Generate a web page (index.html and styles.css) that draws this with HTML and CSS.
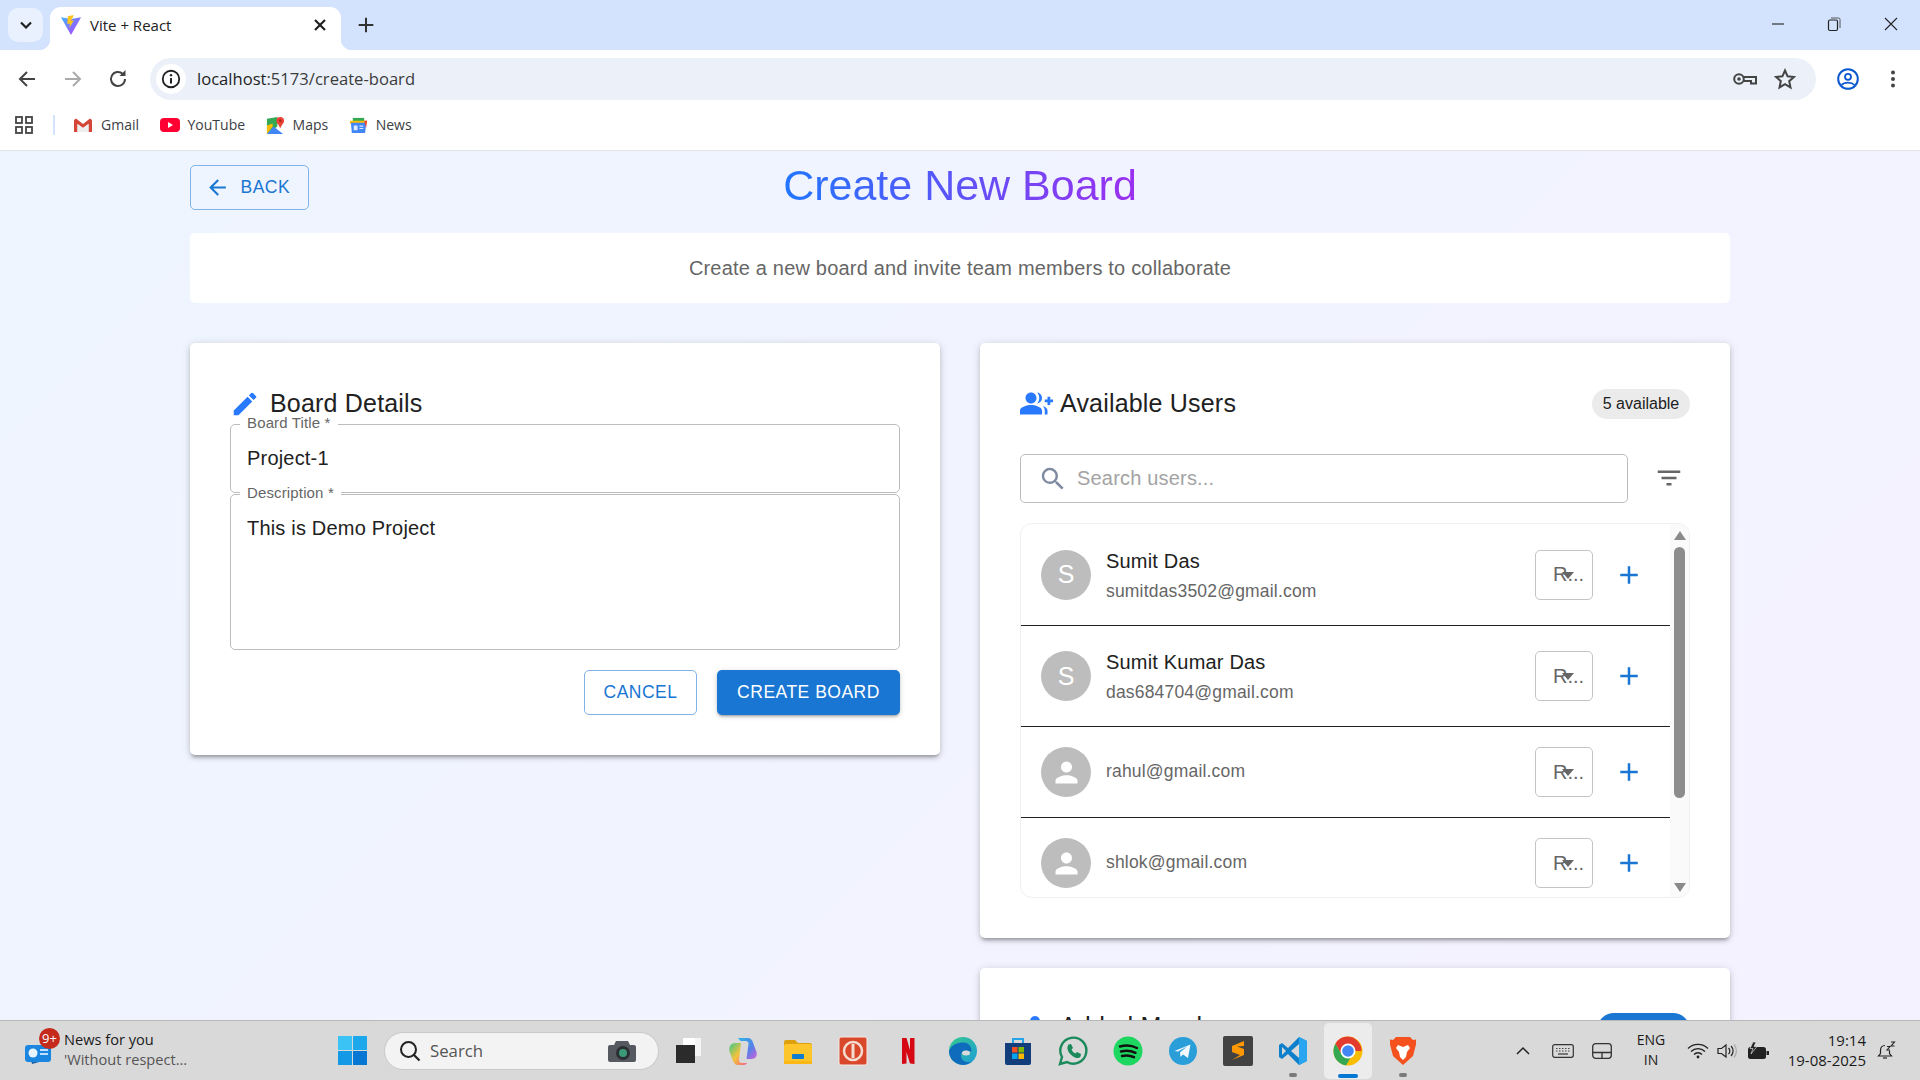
FILE: index.html
```html
<!DOCTYPE html>
<html lang="en">
<head>
<meta charset="utf-8">
<title>Vite + React</title>
<link rel="stylesheet" href="styles.css">
</head>
<body>
<div class="screen">
  <header class="tabstrip">
    <button class="tabsearch"><svg viewBox="0 0 24 24" width="20" height="20"><path d="M6 9l6 6 6-6" fill="none" stroke="#1f1f1f" stroke-width="2.6"/></svg></button>
    <div class="tab">
      <svg viewBox="0 0 24 24" width="22" height="22"><defs><linearGradient id="vt" x1="0" y1="0" x2="1" y2="1"><stop offset="0" stop-color="#41b8ff"/><stop offset="1" stop-color="#bd34fe"/></linearGradient></defs><path d="M1 3.500l11 19.500L23 3.500 12 5.500z" fill="url(#vt)"/><path d="M15 1L8.500 2.500 8 11l3-.6-.8 5 5-8.500-3 .6z" fill="#ffc51f"/></svg>
      <span class="tabtitle">Vite + React</span>
      <svg class="tabclose" viewBox="0 0 24 24" width="20" height="20"><path d="M6 6l12 12M18 6L6 18" stroke="#1f1f1f" stroke-width="2.6"/></svg>
    </div>
    <svg class="newtab" viewBox="0 0 24 24" width="22" height="22"><path d="M12 4v16M4 12h16" stroke="#333" stroke-width="2.2"/></svg>
    <div class="winctrls">
      <svg viewBox="0 0 16 16" width="16" height="16"><path d="M2 8h12" stroke="#222" stroke-width="1.1"/></svg>
      <svg viewBox="0 0 16 16" width="16" height="16"><rect x="2.5" y="4" width="9" height="10.5" rx="1.5" fill="none" stroke="#222" stroke-width="1.2"/><path d="M5 2h7.500a1.500 1.500 0 0 1 1.500 1.500V12" fill="none" stroke="#555" stroke-width="1"/></svg>
      <svg viewBox="0 0 16 16" width="16" height="16"><path d="M2 2l12 12M14 2L2 14" stroke="#222" stroke-width="1.1"/></svg>
    </div>
  </header>

  <div class="toolbar">
    <svg class="navicon" viewBox="0 0 24 24" width="24" height="24"><path d="M20 12H5M12 5l-7 7 7 7" fill="none" stroke="#444" stroke-width="2"/></svg>
    <svg class="navicon" viewBox="0 0 24 24" width="24" height="24"><path d="M4 12h15M12 5l7 7-7 7" fill="none" stroke="#aaa" stroke-width="2"/></svg>
    <svg class="navicon" viewBox="0 0 24 24" width="24" height="24"><path d="M19 12a7 7 0 1 1-2.200-5.100" fill="none" stroke="#444" stroke-width="2"/><path d="M19.500 3v6h-6z" fill="#444"/></svg>
    <div class="omnibox">
      <span class="infobubble"><svg viewBox="0 0 24 24" width="22" height="22"><circle cx="12" cy="12" r="9" fill="none" stroke="#222" stroke-width="2"/><path d="M12 11v6" stroke="#222" stroke-width="2.2"/><circle cx="12" cy="7.800" r="1.300" fill="#222"/></svg></span>
      <span class="url">localhost<span class="urlrest">:5173/create-board</span></span>
      <svg class="omniicon omnikey" viewBox="0 0 24 18" width="24" height="18"><circle cx="6" cy="9" r="4.800" fill="none" stroke="#444" stroke-width="2"/><circle cx="6" cy="9" r="1.800" fill="#444"/><path d="M11 7h12v6.500h-5V11h-7" fill="none" stroke="#444" stroke-width="2"/></svg>
      <svg class="omniicon" viewBox="0 0 24 24" width="24" height="24"><path d="M12 3.500l2.600 5.800 6.300.7-4.700 4.200 1.300 6.200L12 17.200l-5.500 3.200 1.300-6.200L3.100 10l6.300-.7z" fill="none" stroke="#444" stroke-width="2"/></svg>
    </div>
    <svg class="profile" viewBox="0 0 24 24" width="24" height="24"><circle cx="12" cy="12" r="9.800" fill="none" stroke="#0b57d0" stroke-width="2"/><circle cx="12" cy="9.800" r="3" fill="none" stroke="#0b57d0" stroke-width="1.800"/><path d="M5.500 18c3-3.200 10-3.200 13 0" fill="none" stroke="#0b57d0" stroke-width="1.800"/></svg>
    <svg class="kebab" viewBox="0 0 24 24" width="24" height="24"><circle cx="12" cy="5.500" r="2" fill="#444"/><circle cx="12" cy="12" r="2" fill="#444"/><circle cx="12" cy="18.500" r="2" fill="#444"/></svg>
  </div>

  <nav class="bookmarks">
    <svg class="apps" viewBox="0 0 18 18" width="18" height="18"><g fill="none" stroke="#444" stroke-width="1.800"><rect x="1" y="1" width="6" height="6"/><rect x="11" y="1" width="6" height="6"/><rect x="1" y="11" width="6" height="6"/><rect x="11" y="11" width="6" height="6"/></g></svg>
    <span class="bmsep"></span>
    <a class="bm"><svg viewBox="0 0 20 16" width="20" height="16"><path d="M1 3v12h3.500V7L10 11l5.500-4v8H19V3l-2-1.500L10 7 3 1.500z" fill="#d44638"/><path d="M4.500 15V7L10 11l5.500-4v8z" fill="#eee"/></svg>Gmail</a>
    <a class="bm"><svg viewBox="0 0 20 14" width="20" height="14"><rect width="20" height="14" rx="4" fill="#ff0033"/><path d="M8 4l5 3-5 3z" fill="#fff"/></svg>YouTube</a>
    <a class="bm"><svg viewBox="0 0 20 20" width="19" height="19"><path d="M1 3l11-2v10L1 19z" fill="#34a853"/><path d="M1 19l7-8 10 8z" fill="#4285f4"/><path d="M1 10l6-2v3l-6 8z" fill="#fbbc04"/><circle cx="15" cy="5" r="4" fill="#ea4335"/><path d="M12 7l3 6 3-6z" fill="#ea4335"/><circle cx="15" cy="5" r="1.300" fill="#a52714"/></svg>Maps</a>
    <a class="bm"><svg viewBox="0 0 20 20" width="19" height="19"><path d="M4 2h12v6H4z" fill="#34a853"/><path d="M1 5h18v3H1z" fill="#fbbc04"/><path d="M2 7h16l-1 11H3z" fill="#4285f4"/><path d="M16 5h3l-1 8z" fill="#ea4335"/><path d="M5 10h4v5H5zM11 10h4v1.300h-4zM11 12.500h4v1.300h-4z" fill="#dbe8ff"/></svg>News</a>
  </nav>

  <main class="page">
    <div class="pagehead">
      <div class="headleft">
        <button class="btn btn-outline btn-back"><svg viewBox="0 0 24 24" width="25" height="25"><path d="M20 11H7.830l5.590-5.590L12 4l-8 8 8 8 1.410-1.410L7.830 13H20v-2z" fill="#1976d2"/></svg>Back</button>
      </div>
      <h1 class="pagetitle">Create New Board</h1>
      <div></div>
    </div>
    <div class="subtitle">Create a new board and invite team members to collaborate</div>

    <div class="columns">
      <section class="card card-left">
        <h2 class="cardtitle"><svg class="titleicon icon-edit" viewBox="0 0 24 24" width="30" height="30"><path d="M3 17.250V21h3.750L17.810 9.940l-3.750-3.750L3 17.250zM20.710 7.040a1 1 0 0 0 0-1.410l-2.340-2.340a1 1 0 0 0-1.410 0l-1.830 1.830 3.750 3.750 1.830-1.830z" fill="#2979ff"/></svg>Board Details</h2>
        <div class="field field-title">
          <label class="fieldlabel">Board Title *</label>
          <span class="fieldvalue">Project-1</span>
        </div>
        <div class="field field-desc">
          <label class="fieldlabel">Description *</label>
          <span class="fieldvalue">This is Demo Project</span>
        </div>
        <div class="actions">
          <button class="btn btn-outline btn-cancel">Cancel</button>
          <button class="btn btn-solid">Create Board</button>
        </div>
      </section>

      <div class="rightcol">
        <section class="card card-users">
          <div class="usershead">
            <h2 class="cardtitle"><svg class="titleicon icon-users" viewBox="0 0 24 24" width="33" height="33"><path d="M22 9V7h-2v2h-2v2h2v2h2v-2h2V9zM8 12c2.210 0 4-1.790 4-4s-1.790-4-4-4-4 1.790-4 4 1.790 4 4 4zm0 1c-2.670 0-8 1.340-8 4v3h16v-3c0-2.660-5.330-4-8-4zm4.510-8.950C13.430 5.110 14 6.490 14 8s-.57 2.890-1.490 3.950C14.470 11.700 16 10.040 16 8s-1.530-3.700-3.490-3.950zm4.020 9.780C17.420 14.660 18 15.700 18 17v3h2v-3c0-1.450-1.590-2.510-3.470-3.170z" fill="#2979ff"/></svg>Available Users</h2>
            <span class="chip">5 available</span>
          </div>
          <div class="searchrow">
            <div class="searchbox">
              <svg viewBox="0 0 24 24" width="30" height="30"><path d="M15.500 14h-.79l-.28-.27A6.470 6.470 0 0 0 16 9.500 6.500 6.500 0 1 0 9.500 16c1.610 0 3.090-.59 4.230-1.570l.27.28v.79l5 4.990L20.490 19l-4.990-5zm-6 0C7.010 14 5 11.990 5 9.500S7.010 5 9.500 5 14 7.010 14 9.500 11.990 14 9.500 14z" fill="#7e8ba0"/></svg>
              <span>Search users...</span>
            </div>
            <svg class="filter" viewBox="0 0 24 24" width="30" height="30"><path d="M10 18h4v-2h-4v2zM3 6v2h18V6H3zm3 7h12v-2H6v2z" fill="#666"/></svg>
          </div>
          <div class="userlist">
            <div class="rows">
              <div class="row row-tall">
                <span class="avatar">S</span>
                <div class="userinfo"><div class="username">Sumit Das</div><div class="useremail">sumitdas3502@gmail.com</div></div>
                <div class="rolesel">R...<i class="caret"></i></div>
                <svg class="plus" viewBox="0 0 24 24" width="30" height="30"><path d="M19 13h-6v6h-2v-6H5v-2h6V5h2v6h6v2z" fill="#1976d2"/></svg>
              </div>
              <div class="row row-tall">
                <span class="avatar">S</span>
                <div class="userinfo"><div class="username">Sumit Kumar Das</div><div class="useremail">das684704@gmail.com</div></div>
                <div class="rolesel">R...<i class="caret"></i></div>
                <svg class="plus" viewBox="0 0 24 24" width="30" height="30"><path d="M19 13h-6v6h-2v-6H5v-2h6V5h2v6h6v2z" fill="#1976d2"/></svg>
              </div>
              <div class="row">
                <span class="avatar"><svg viewBox="0 0 24 24" width="33" height="33"><path d="M12 12c2.210 0 4-1.790 4-4s-1.790-4-4-4-4 1.790-4 4 1.790 4 4 4zm0 2c-2.670 0-8 1.340-8 4v2h16v-2c0-2.660-5.330-4-8-4z" fill="#fff"/></svg></span>
                <div class="userinfo"><div class="useremail">rahul@gmail.com</div></div>
                <div class="rolesel">R...<i class="caret"></i></div>
                <svg class="plus" viewBox="0 0 24 24" width="30" height="30"><path d="M19 13h-6v6h-2v-6H5v-2h6V5h2v6h6v2z" fill="#1976d2"/></svg>
              </div>
              <div class="row">
                <span class="avatar"><svg viewBox="0 0 24 24" width="33" height="33"><path d="M12 12c2.210 0 4-1.790 4-4s-1.790-4-4-4-4 1.790-4 4 1.790 4 4 4zm0 2c-2.670 0-8 1.340-8 4v2h16v-2c0-2.660-5.330-4-8-4z" fill="#fff"/></svg></span>
                <div class="userinfo"><div class="useremail">shlok@gmail.com</div></div>
                <div class="rolesel">R...<i class="caret"></i></div>
                <svg class="plus" viewBox="0 0 24 24" width="30" height="30"><path d="M19 13h-6v6h-2v-6H5v-2h6V5h2v6h6v2z" fill="#1976d2"/></svg>
              </div>
            </div>
            <div class="scrollbar">
              <i class="sb-up"></i>
              <i class="sb-thumb"></i>
              <i class="sb-down"></i>
            </div>
          </div>
        </section>
        <section class="card card-members">
          <div class="usershead">
            <h2 class="cardtitle"><svg class="titleicon" viewBox="0 0 24 24" width="30" height="30"><path d="M12 12c2.210 0 4-1.790 4-4s-1.790-4-4-4-4 1.790-4 4 1.790 4 4 4zm0 2c-2.670 0-8 1.340-8 4v2h16v-2c0-2.660-5.330-4-8-4z" fill="#2979ff"/></svg>Added Members</h2>
            <span class="chip chip-blue"></span>
          </div>
        </section>
      </div>
    </div>
  </main>

  <footer class="taskbar">
    <div class="widget">
      <span class="widgeticon">
        <svg viewBox="0 0 30 30" width="30" height="30"><path d="M4 12l20-3 2 14-18 5z" fill="#1b5fa8"/><rect x="1" y="9" width="26" height="17" rx="3" fill="#1a86e0"/><circle cx="9" cy="17" r="4.500" fill="#e8f4ff"/><path d="M16 14h8M16 18h8" stroke="#bfe0ff" stroke-width="2"/></svg>
        <b class="badge">9+</b>
      </span>
      <div class="widgettext"><div>News for you</div><div class="muted">'Without respect...</div></div>
    </div>
    <svg class="winlogo" viewBox="0 0 29 29" width="29" height="29"><rect width="14" height="14" fill="#3cc3f5"/><rect x="15" width="14" height="14" fill="#1ea8ec"/><rect y="15" width="14" height="14" fill="#1399e6"/><rect x="15" y="15" width="14" height="14" fill="#0678d4"/></svg>
    <div class="winsearch">
      <svg viewBox="0 0 24 24" width="24" height="24"><circle cx="10.500" cy="10.500" r="7.500" fill="none" stroke="#222" stroke-width="2"/><path d="M16 16l5.500 5.500" stroke="#222" stroke-width="2.200"/></svg>
      <span>Search</span>
      <svg class="camera" viewBox="0 0 30 30" width="30" height="30"><path d="M9 5h12l2 4h4a2 2 0 0 1 2 2v13a2 2 0 0 1-2 2H3a2 2 0 0 1-2-2V11a2 2 0 0 1 2-2h4z" fill="#565a60"/><circle cx="16" cy="17" r="7" fill="#2b2f33"/><circle cx="16" cy="17" r="4" fill="#3a9a78"/></svg>
    </div>
    <div class="appicons">
      <span class="app"><svg viewBox="0 0 30 30" width="30" height="30"><rect x="10" y="2" width="18" height="18" fill="#f4f4f4"/><rect x="3" y="9" width="19" height="18" fill="#2b2b2b"/><rect x="10" y="2" width="12" height="7" fill="#fff"/></svg></span>
      <span class="app"><svg viewBox="0 0 30 30" width="30" height="30"><defs><linearGradient id="cpa" x1="0" y1="0" x2="1" y2="1"><stop offset="0" stop-color="#2bb5e8"/><stop offset=".6" stop-color="#5a7fe8"/><stop offset="1" stop-color="#d45fd8"/></linearGradient><linearGradient id="cpb" x1="0" y1="0" x2="1" y2="1"><stop offset="0" stop-color="#38c98a"/><stop offset=".5" stop-color="#f5c33b"/><stop offset="1" stop-color="#f0608a"/></linearGradient></defs><path d="M10 2h10c3 0 4.500 2.500 5.500 6l3 8c1 4-1 7-5 7h-5l2-15c.3-2-1-3-3-3h-5z" fill="url(#cpa)"/><path d="M7 7h6l-2 16c-.3 2 1 4 3 4h5c-1 1.500-2 2-4 2h-5c-3 0-4.500-2-5.500-5.500l-3-8C.500 11 3 7 7 7z" fill="url(#cpb)"/></svg></span>
      <span class="app"><svg viewBox="0 0 30 30" width="30" height="30"><path d="M1 6a2 2 0 0 1 2-2h9l3 3h12a2 2 0 0 1 2 2v4H1z" fill="#dfa00e"/><rect x="1" y="8" width="28" height="20" rx="2" fill="#fbc52b"/><rect x="9" y="18" width="12" height="5" rx="1" fill="#0f7bd1"/><rect x="1" y="25" width="28" height="3" fill="#fbb716"/></svg></span>
      <span class="app"><svg viewBox="0 0 30 30" width="30" height="30"><rect x="1" y="1" width="28" height="28" rx="2" fill="#d9482a" stroke="#f4e9e4"/><circle cx="15" cy="15" r="9" fill="none" stroke="#f5ddd2" stroke-width="2.500"/><rect x="13.500" y="8" width="3" height="14" fill="#f5ddd2"/></svg></span>
      <span class="app"><svg viewBox="0 0 30 30" width="30" height="30"><path d="M9 2h4.500L17 14V2h4.500v26q-2.200-.4-4.500-.5L13.500 16v11.500Q11 27.700 9 28z" fill="#d60813"/></svg></span>
      <span class="app"><svg viewBox="0 0 30 30" width="30" height="30"><defs><linearGradient id="edg" x1="0" y1="0" x2="1" y2="1"><stop offset="0" stop-color="#36c98e"/><stop offset="1" stop-color="#1c9dd8"/></linearGradient></defs><circle cx="15" cy="15" r="14" fill="url(#edg)"/><path d="M1 15a14 14 0 0 0 23 10.500c-6 2-11-1-11-6 0-3 2.500-5 5.500-5 3 0 5 2 5 0 0-5-4-8-8-8C9 6.500 3 9 1 15z" fill="#0f6cbd"/><ellipse cx="18" cy="17" rx="4" ry="2.500" fill="#d9d9d9"/></svg></span>
      <span class="app"><svg viewBox="0 0 30 30" width="30" height="30"><path d="M10 7V3h10v4" fill="none" stroke="#25a5e8" stroke-width="2"/><path d="M2 7h26v20a2 2 0 0 1-2 2H4a2 2 0 0 1-2-2z" fill="#123f7b"/><rect x="9" y="11" width="5.500" height="5.500" fill="#f25022"/><rect x="15.500" y="11" width="5.500" height="5.500" fill="#7fba00"/><rect x="9" y="17.500" width="5.500" height="5.500" fill="#00a4ef"/><rect x="15.500" y="17.500" width="5.500" height="5.500" fill="#ffb900"/></svg></span>
      <span class="app"><svg viewBox="0 0 30 30" width="30" height="30"><path d="M2 28l2-7A13 13 0 1 1 9 26z" fill="none" stroke="#1a8a5a" stroke-width="2.400"/><path d="M10.500 8.500l2.500-.5 2 4-1.500 1.500c.8 2 2 3.200 4 4l1.500-1.500 4 2-.5 2.500c-1 1.500-3 2-5 1.200-4-1.500-7-4.700-8-8.500-.3-1.800.2-3.500 1-4.700z" fill="#1a8a5a"/></svg></span>
      <span class="app"><svg viewBox="0 0 30 30" width="30" height="30"><circle cx="15" cy="15" r="14.500" fill="#1ed760"/><path d="M7 10.500c6-1.600 12-1 17 1.500M8 15.500c5-1.300 10-.8 14.500 1.300M9 20c4-1 8.500-.6 12 1.200" fill="none" stroke="#111" stroke-width="2.500" stroke-linecap="round"/></svg></span>
      <span class="app"><svg viewBox="0 0 30 30" width="30" height="30"><circle cx="15" cy="15" r="14" fill="#2a9ed8"/><path d="M6.500 15L22.500 8.500 20 22l-5-3.500-2.500 2.500-.5-4.500 7-6-9 5z" fill="#f3f8fc"/></svg></span>
      <span class="app"><svg viewBox="0 0 30 30" width="30" height="30"><rect width="30" height="30" rx="2" fill="#424242"/><path d="M21 5L9 10v6l8 3-8 5 12-5v-6l-7-2.500L21 10z" fill="#ff9800"/></svg></span>
      <span class="app app-run"><svg viewBox="0 0 30 30" width="30" height="30"><path d="M21 1l8 4v20l-8 4-11-11-6 5-3-2V9l3-2 6 5z" fill="#0e7fcb"/><path d="M21 1l8 4v20l-8 4z" fill="#2aa5ef"/><path d="M21 8v14l-8-7z" fill="#d9d9d9"/><path d="M4 11l4 4-4 4z" fill="#d9d9d9"/></svg><i class="rundot"></i></span>
      <span class="app app-active"><svg viewBox="0 0 30 30" width="30" height="30"><circle cx="15" cy="15" r="14.500" fill="#fbbc04"/><path d="M15 .5A14.500 14.500 0 0 0 2.400 7.700L9 19l6-4h13.500A14.500 14.500 0 0 0 15 .5z" fill="#e33b2e"/><path d="M2.400 7.700A14.500 14.500 0 0 0 13 29.400L19 19H9z" fill="#34a853"/><circle cx="15" cy="15" r="7.500" fill="#fff"/><circle cx="15" cy="15" r="5.800" fill="#4285f4"/></svg><i class="activebar"></i></span>
      <span class="app app-run"><svg viewBox="0 0 30 30" width="30" height="30"><path d="M8 1h14l3 3 3-.5v5L25 20l-10 9-10-9L2 8.500v-5l3 .5z" fill="#f4511e"/><path d="M10 9l5 2 5-2 2 3-3 4-1 5-3 3-3-3-1-5-3-4z" fill="#fff"/></svg><i class="rundot"></i></span>
    </div>
    <div class="tray">
      <span class="t-caret"><svg viewBox="0 0 16 16" width="16" height="16"><path d="M2 11l6-6 6 6" fill="none" stroke="#222" stroke-width="1.500"/></svg></span>
      <span class="t-kbd"><svg viewBox="0 0 22 16" width="22" height="16"><rect x=".7" y="1.700" width="20.600" height="12.600" rx="2" fill="none" stroke="#333" stroke-width="1.200"/><path d="M4 5.500h14M4 8h14" stroke="#444" stroke-dasharray="1.500 1.500"/><path d="M6 11h10" stroke="#333" stroke-width="1.200"/></svg></span>
      <span class="t-pad"><svg viewBox="0 0 20 16" width="20" height="16"><rect x=".7" y=".7" width="18.600" height="14.600" rx="3" fill="none" stroke="#333" stroke-width="1.300"/><path d="M1 9.500h18M10 9.500v6" stroke="#333" stroke-width="1.300"/></svg></span>
      <span class="t-lang">ENG<br>IN</span>
      <span class="t-wifi"><svg viewBox="0 0 22 16" width="22" height="16"><path d="M1 5.500a14 14 0 0 1 20 0M4 8.500a10 10 0 0 1 14 0M7 11.500a5.500 5.500 0 0 1 8 0" fill="none" stroke="#222" stroke-width="1.300"/><circle cx="11" cy="14" r="1.400" fill="#222"/></svg></span>
      <span class="t-vol"><svg viewBox="0 0 22 16" width="22" height="16"><path d="M1 5.500h3.500L9 2v12l-4.500-3.500H1z" fill="none" stroke="#222" stroke-width="1.200"/><path d="M11.500 5a4 4 0 0 1 0 6M14 3a7 7 0 0 1 0 10" fill="none" stroke="#222" stroke-width="1.200"/><path d="M17 1.500a10 10 0 0 1 0 13" fill="none" stroke="#aaa" stroke-width="1.200"/></svg></span>
      <span class="t-bat"><svg viewBox="0 0 22 18" width="22" height="18"><rect x="1" y="5" width="18" height="12" rx="2.500" fill="#222"/><rect x="19.500" y="9" width="2.500" height="4" fill="#222"/><path d="M6 0L3 6.500h3L4 12l6-7.500H7L9 0z" fill="#222" stroke="#d9d9d9" stroke-width=".7"/></svg></span>
      <span class="t-clock"><span>19:14</span><span>19-08-2025</span></span>
      <span class="t-bell"><svg viewBox="0 0 20 20" width="20" height="20"><path d="M9 4.500c-3 0-4.500 2-4.500 5v3L2.500 15h13L13.500 12.500v-3" fill="none" stroke="#222" stroke-width="1.200"/><path d="M7 17h4" stroke="#222" stroke-width="1.200"/><path d="M11 5.500h3l-3 3.500h3M15 1h3.500L15 5h3.500" fill="none" stroke="#222" stroke-width="1.100"/></svg></span>
    </div>
  </footer>
</div>
</body>
</html>
```
FILE: styles.css
```css
* { box-sizing: border-box; }
html, body { margin: 0; height: 100%; overflow: hidden; }
body { font-family: "Liberation Sans", Arial, sans-serif; color: #212121; }
button { font-family: inherit; }
.screen { width: 1920px; height: 1080px; display: flex; flex-direction: column; overflow: hidden; }

/* Browser chrome */
.tabstrip { height: 50px; flex: none; background: #d3e3fd; display: flex; align-items: flex-start; padding-left: 8px; }
.tabsearch { width: 35px; height: 34px; margin-top: 8px; border: 0; border-radius: 10px; background: #e9f0fe; display: flex; align-items: center; justify-content: center; padding: 0; }
.tab { position: relative; width: 291px; height: 43px; margin-top: 7px; margin-left: 7px; background: #fff; border-radius: 11px 11px 0 0; display: flex; align-items: center; padding: 0 10px 7px; font-family: "Open Sans", sans-serif; font-size: 15px; color: #222; }
.tab::before, .tab::after { content: ""; position: absolute; bottom: 0; width: 11px; height: 11px; }
.tab::before { left: -11px; background: radial-gradient(circle at 0 0, transparent 11px, #fff 11.500px); }
.tab::after { right: -11px; background: radial-gradient(circle at 100% 0, transparent 11px, #fff 11.500px); }
.tabtitle { margin-left: 8px; flex: 1; }
.tabclose { margin-right: 1px; }
.newtab { margin: 14px 0 0 14px; }
.winctrls { margin-left: auto; display: flex; height: 48px; align-items: center; gap: 40px; padding-right: 21px; }
.winctrls svg { width: 16px; height: 16px; }
.winctrls svg:last-child { margin-left: 1px; }

.toolbar { height: 50px; flex: none; background: #fff; border-radius: 10px 10px 0 0; display: flex; align-items: center; padding: 8px 0 0 15px; }
.navicon { margin-right: 22px; }
.navicon:nth-child(2) { margin-right: 21px; }
.navicon:nth-child(3) { margin-right: 20px; }
.omnibox { width: 1666px; height: 42px; background: #ebf0f9; border-radius: 21px; display: flex; align-items: center; padding: 0 19px 0 6px; }
.infobubble { width: 30px; height: 30px; background: #fff; border-radius: 50%; display: flex; align-items: center; justify-content: center; }
.url { margin-left: 11px; flex: 1; font-family: "Open Sans", sans-serif; font-size: 16.600px; line-height: 22px; padding-bottom: 1px; color: #1f1f1f; }
.urlrest { color: #3c3c3c; }
.omniicon { margin-left: 16px; }
.profile { margin-left: 20px; }
.kebab { margin-left: 21px; }

.bookmarks { height: 51px; flex: none; background: #fff; border-bottom: 1px solid #e3e3e3; display: flex; align-items: center; padding: 0 0 0 15px; font-family: "Open Sans", sans-serif; font-size: 14px; color: #3c4043; }
.bmsep { width: 2px; height: 20px; background: #d3e3fd; margin: 0 18px 0 20px; }
.bm { display: flex; align-items: center; gap: 8px; margin-right: 20.500px; line-height: 18px; }

/* Page */
.page { flex: 1; min-height: 0; overflow: hidden; background: linear-gradient(135deg, #eef5ff, #f5f2ff); padding: 14px 190px 0; }
.pagehead { display: grid; grid-template-columns: 1fr auto 1fr; align-items: center; height: 45px; }
.pagetitle { margin: 0 0 4px; font-size: 43px; font-weight: 400; line-height: 41px; background: linear-gradient(90deg, #2176ff, #9b2ff0); -webkit-background-clip: text; background-clip: text; color: transparent; padding-bottom: 0; overflow: visible; }
.btn { height: 45px; border-radius: 5px; font-size: 17.500px; font-weight: 500; letter-spacing: .5px; text-transform: uppercase; padding: 0; display: inline-flex; align-items: center; justify-content: center; }
.btn-outline { background: transparent; border: 1px solid #80b2e5; color: #1976d2; }
.btn-back { width: 119px; gap: 11px; justify-content: flex-start; padding-left: 13.500px; }
.btn-cancel { width: 113px; background: #fff; }
.btn-solid { width: 183px; border: 0; background: #1976d2; color: #fff; box-shadow: 0 3px 2px -2px rgba(0,0,0,.2), 0 2px 3px rgba(0,0,0,.14), 0 1px 6px rgba(0,0,0,.12); }
.subtitle { margin-top: 23px; height: 70px; background: #fff; border-radius: 5px; display: flex; align-items: center; justify-content: center; font-size: 20px; letter-spacing: .19px; color: #666; }

.columns { margin-top: 40px; display: grid; grid-template-columns: 750px 750px; gap: 40px; align-items: start; }
.card { background: #fff; border-radius: 5px; box-shadow: 0 4px 3px -2px rgba(0,0,0,.2), 0 3px 5px rgba(0,0,0,.14), 0 1px 10px rgba(0,0,0,.12); padding: 40px; }
.card-left { height: 412px; }
.rightcol { display: flex; flex-direction: column; gap: 30px; }
.cardtitle { margin: 0; display: flex; align-items: center; font-size: 25px; font-weight: 400; letter-spacing: .19px; line-height: 41px; height: 41px; color: #212121; }
.titleicon { margin-right: 10px; flex: none; }
.icon-users { margin-right: 7px; }

.field { position: relative; border: 1px solid #bdbdbd; border-radius: 5px; padding: 0 16px; }
.field-title { height: 69px; display: flex; align-items: center; padding-bottom: 2px; }
.field-desc { height: 156px; margin-top: 1px; padding-top: 19px; }
.fieldlabel { position: absolute; left: 9px; top: -11px; background: #fff; padding: 0 7px; font-size: 15px; line-height: 17px; letter-spacing: .14px; color: #666; }
.fieldvalue { font-size: 20px; line-height: 28px; letter-spacing: .19px; color: #212121; }
.actions { margin-top: 20px; display: flex; justify-content: flex-end; gap: 20px; }

.card-users { height: 595px; }
.usershead { display: flex; align-items: center; justify-content: space-between; }
.chip { width: 98px; height: 30px; border-radius: 15px; background: #ebebeb; display: flex; align-items: center; justify-content: center; font-size: 16px; color: #212121; }
.searchrow { margin-top: 30px; display: flex; align-items: center; }
.searchbox { width: 608px; height: 49px; border: 1px solid #bdbdbd; border-radius: 5px; display: flex; align-items: center; padding-left: 17px; gap: 9px; font-size: 20px; letter-spacing: .19px; color: #a3a3a3; }
.filter { margin-left: 26px; margin-top: -2px; }
.userlist { margin-top: 20px; height: 375px; border: 1px solid #f0f0f0; border-radius: 12px; display: flex; overflow: hidden; }
.rows { flex: 1; min-width: 0; overflow: hidden; }
.row { height: 91px; padding: 0 26px 0 20px; border-bottom: 1px solid #222; display: flex; align-items: center; }
.row-tall { height: 102px; }
.row-tall + .row-tall { height: 101px; }
.avatar { width: 50px; height: 50px; border-radius: 50%; background: #bdbdbd; color: #fff; font-size: 25px; display: flex; align-items: center; justify-content: center; flex: none; }
.userinfo { flex: 1; margin-left: 15px; }
.username { font-size: 20px; line-height: 28px; margin-top: 1px; letter-spacing: .19px; color: #212121; }
.useremail { font-size: 17.500px; line-height: 25px; margin-top: 4px; letter-spacing: .187px; color: #666; }
.row:not(.row-tall) .useremail { margin-top: 0; padding-bottom: 2px; }
.rolesel { position: relative; width: 58px; height: 50px; border: 1px solid #c4c4c4; border-radius: 5px; display: flex; align-items: center; padding-left: 17px; font-size: 20px; color: #666; flex: none; }
.caret { position: absolute; left: 26px; top: 21px; width: 0; height: 0; border-left: 6.500px solid transparent; border-right: 6.500px solid transparent; border-top: 7px solid #666; }
.plus { margin-left: 21px; flex: none; }
.scrollbar { width: 19px; flex: none; background: #fafafa; display: flex; flex-direction: column; align-items: center; padding-top: 7px; }
.sb-up { width: 0; height: 0; border-left: 6px solid transparent; border-right: 6px solid transparent; border-bottom: 9px solid #8a8a8a; }
.sb-thumb { width: 11px; height: 251px; margin-top: 7px; background: #8c8c8c; border-radius: 6px; }
.sb-down { width: 0; height: 0; margin-top: auto; margin-bottom: 5px; border-left: 6px solid transparent; border-right: 6px solid transparent; border-top: 9px solid #8a8a8a; }

.card-members { height: 120px; padding-top: 37px; }
.chip-blue { width: 93px; height: 34px; border-radius: 17px; align-self: flex-start; margin-top: 8px; background: #1976d2; }

/* Taskbar */
.taskbar { height: 60px; flex: none; background: #d9d9d9; border-top: 1px solid #b8b8b8; display: flex; align-items: center; font-family: "Open Sans", sans-serif; color: #1b1b1b; }
.widget { width: 338px; flex: none; display: flex; align-items: center; padding-left: 24px; font-size: 14.600px; }
.widgeticon { position: relative; width: 30px; height: 30px; }
.badge { position: absolute; left: 15px; top: -8px; width: 21px; height: 21px; border-radius: 50%; background: #c42b1c; color: #fff; font-size: 13px; font-weight: 400; display: flex; align-items: center; justify-content: center; }
.widgettext { margin-left: 10px; line-height: 20px; margin-top: -4px; }
.muted { color: #555; }
.winlogo { flex: none; }
.winsearch { width: 275px; height: 38px; margin-left: 17px; border-radius: 19px; background: #f3f3f3; border: 1px solid #c9c9c9; display: flex; align-items: center; padding-left: 13px; gap: 8px; font-size: 16.800px; color: #555; flex: none; }
.camera { margin-left: auto; margin-right: 21px; }
.appicons { margin-left: 1px; display: flex; flex: none; }
.app { position: relative; width: 55px; height: 56px; display: flex; align-items: center; justify-content: center; }
.app-active { background: #ececec; border-radius: 5px; width: 48px; margin: 0 3.500px; }
.rundot { position: absolute; bottom: 2px; left: 50%; margin-left: -4px; width: 8px; height: 4px; border-radius: 2px; background: #7a7a7a; }
.activebar { position: absolute; bottom: 1px; left: 50%; margin-left: -10px; width: 20px; height: 4px; border-radius: 2px; background: #0678d4; }
.tray { margin-left: auto; display: flex; align-items: center; padding-right: 14px; height: 100%; font-size: 14px; }
.tray > span { display: flex; align-items: center; justify-content: center; }
.t-caret, .t-kbd { width: 40px; }
.t-pad { width: 38px; }
.t-lang { width: 60px; text-align: center; line-height: 20px; padding-bottom: 2px; }
.t-wifi { width: 34px; }
.t-vol { width: 26px; }
.t-bat { width: 34px; }
.tray > .t-clock { width: 91px; flex-direction: column; align-items: flex-end; line-height: 20px; font-size: 15px; padding-bottom: 2px; }
.t-bell { width: 40px; }
```
